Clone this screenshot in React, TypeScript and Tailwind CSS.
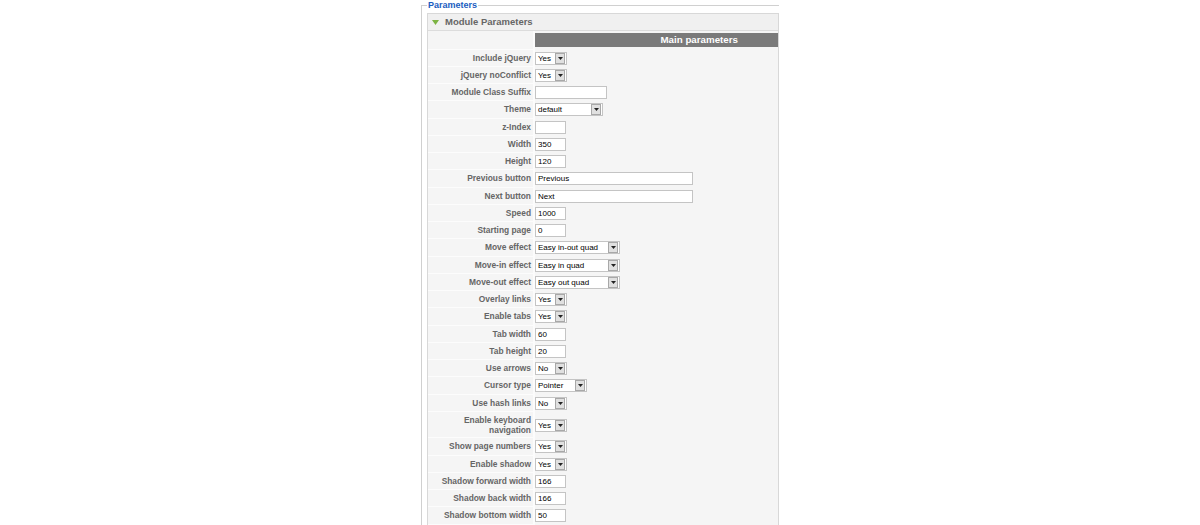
import React from "react";

type Row = {
  label: string;
  kind: "text" | "select";
  value: string;
  width: string;
  tall?: boolean;
};

const rows: Row[] = [
  { label: "Include jQuery", kind: "select", value: "Yes", width: "w-[32px]" },
  { label: "jQuery noConflict", kind: "select", value: "Yes", width: "w-[32px]" },
  { label: "Module Class Suffix", kind: "text", value: "", width: "w-[72px]" },
  { label: "Theme", kind: "select", value: "default", width: "w-[68px]" },
  { label: "z-Index", kind: "text", value: "", width: "w-[31px]" },
  { label: "Width", kind: "text", value: "350", width: "w-[31px]" },
  { label: "Height", kind: "text", value: "120", width: "w-[31px]" },
  { label: "Previous button", kind: "text", value: "Previous", width: "w-[158px]" },
  { label: "Next button", kind: "text", value: "Next", width: "w-[158px]" },
  { label: "Speed", kind: "text", value: "1000", width: "w-[31px]" },
  { label: "Starting page", kind: "text", value: "0", width: "w-[31px]" },
  { label: "Move effect", kind: "select", value: "Easy in-out quad", width: "w-[85px]" },
  { label: "Move-in effect", kind: "select", value: "Easy in quad", width: "w-[85px]" },
  { label: "Move-out effect", kind: "select", value: "Easy out quad", width: "w-[85px]" },
  { label: "Overlay links", kind: "select", value: "Yes", width: "w-[32px]" },
  { label: "Enable tabs", kind: "select", value: "Yes", width: "w-[32px]" },
  { label: "Tab width", kind: "text", value: "60", width: "w-[31px]" },
  { label: "Tab height", kind: "text", value: "20", width: "w-[31px]" },
  { label: "Use arrows", kind: "select", value: "No", width: "w-[32px]" },
  { label: "Cursor type", kind: "select", value: "Pointer", width: "w-[52px]" },
  { label: "Use hash links", kind: "select", value: "No", width: "w-[32px]" },
  { label: "Enable keyboard navigation", kind: "select", value: "Yes", width: "w-[32px]", tall: true },
  { label: "Show page numbers", kind: "select", value: "Yes", width: "w-[32px]" },
  { label: "Enable shadow", kind: "select", value: "Yes", width: "w-[32px]" },
  { label: "Shadow forward width", kind: "text", value: "166", width: "w-[31px]" },
  { label: "Shadow back width", kind: "text", value: "166", width: "w-[31px]" },
  { label: "Shadow bottom width", kind: "text", value: "50", width: "w-[31px]" },
];

function Field({ row }: { row: Row }) {
  if (row.kind === "text") {
    return (
      <div
        className={`${row.width} h-[13px] bg-white border border-[#c4c4c4] px-[2px] text-[8px] leading-[11px] text-black`}
      >
        {row.value}
      </div>
    );
  }
  // fake old-style select box
  return (
    <div className={`${row.width} h-[13px] bg-white border border-[#c4c4c4] flex items-center`}>
      <span className="flex-1 pl-[2px] text-[8px] leading-[11px] text-black whitespace-nowrap overflow-hidden">
        {row.value}
      </span>
      <span className="w-[10px] h-[11px] mr-[1px] bg-[#e0e0e0] border border-[#a8a8a8] flex items-center justify-center">
        <svg width="5" height="3" viewBox="0 0 5 3">
          <path d="M0 0 L5 0 L2.5 3 Z" fill="#222" />
        </svg>
      </span>
    </div>
  );
}

export default function App() {
  return (
    <div className="h-[525px] bg-white font-['Liberation_Sans',Arial,sans-serif] overflow-hidden">
      <div className="mx-auto w-[358px]">
        <fieldset className="border-l border-t border-[#d0d0d0] min-w-0">
          <legend className="ml-[5px] px-[1px] text-[9px] leading-[10px] font-bold text-[#1a5cc0]">
            Parameters
          </legend>

          <div className="ml-[5px] mt-[3px] border border-[#d8d8d8]">
            {/* Header */}
            <div className="h-[17px] bg-[#f0f0f0] border-b border-[#dcdcdc] flex items-center pl-[4px]">
              <svg width="7" height="5" viewBox="0 0 7 5" className="mr-[6px]">
                <path d="M0 0 L7 0 L3.5 5 Z" fill="#7cb342" />
              </svg>
              <span className="text-[9.5px] font-bold text-[#666]">Module Parameters</span>
            </div>

            {/* Content */}
            <div className="bg-[#f5f5f5] pb-[20px]">
              <div className="flex h-[18.5px]">
                <div className="w-[107px] border-r-2 border-b border-[#fcfcfc]" />
                <div className="flex-1 pt-[2px]">
                  <div className="h-[14px] bg-[#7a7a7a] text-white text-[9.75px] font-bold leading-[14px] text-right pr-[40px]">
                    Main parameters
                  </div>
                </div>
              </div>

              {rows.map((row) => (
                <div key={row.label} className={`flex ${row.tall ? "h-[26.5px]" : "h-[17.25px]"}`}>
                  <div className="w-[107px] border-r-2 border-b border-[#fcfcfc] flex items-center justify-end pr-[2px] pl-[6px]">
                    <span className="text-[8.4px] leading-[10px] font-bold text-[#666] text-right">
                      {row.label}
                    </span>
                  </div>
                  <div className="flex-1 flex items-center">
                    <Field row={row} />
                  </div>
                </div>
              ))}
            </div>
          </div>
        </fieldset>
      </div>
    </div>
  );
}
